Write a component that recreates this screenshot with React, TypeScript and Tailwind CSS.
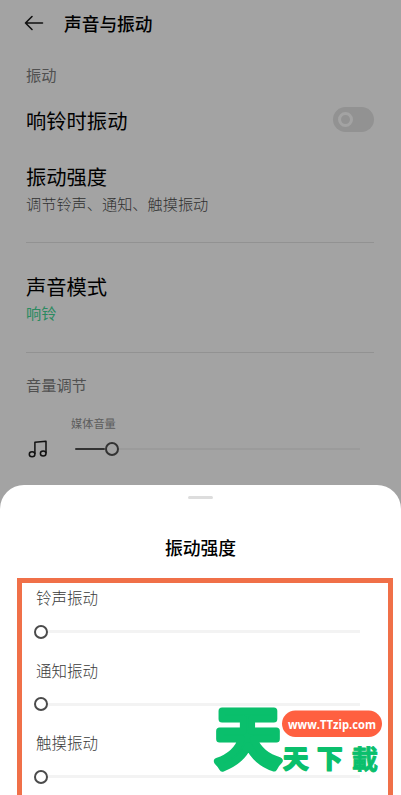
const SHEET_ITEMS = ["铃声振动", "通知振动", "触摸振动"];

const BackIcon = () => {
    return <svg width="20" height="16" viewBox="0 0 20 16" fill="none" stroke="#111111" strokeWidth="1.6" strokeLinecap="round" strokeLinejoin="round">
        <path d="M8 1.5L1.5 8L8 14.5M1.5 8H18.5" />
    </svg>
}

const MusicIcon = () => {
    return <svg width="20" height="18" viewBox="0 0 20 18" fill="none" stroke="#111111" strokeWidth="1.5" strokeLinejoin="round">
        <path d="M6.9 13.9V2.2L18 1.2V13.2" />
        <ellipse cx="4.1" cy="14.2" rx="2.8" ry="2.5" />
        <ellipse cx="15.2" cy="13.5" rx="2.8" ry="2.5" />
    </svg>
}

const Knob = ({ dark }: { dark?: boolean }) => {
    return <div className={dark ? "h-[14px] w-[14px] shrink-0 rounded-full border-[2.5px] border-[#333333] bg-[#a3a3a3]" : "h-[14px] w-[14px] shrink-0 rounded-full border-[2.5px] border-[#4b4b4b] bg-white"}></div>
}

const Watermark = () => {
    return <svg className="absolute left-[200px] top-[665px] overflow-visible" width="195" height="130" viewBox="-10 -35 195 130">
        <rect x="72" y="10.5" width="100" height="26.5" rx="13.25" fill="#ff6040" />
        <text x="78" y="28.5" textLength="88" lengthAdjust="spacingAndGlyphs" fontSize="12.5" fontWeight="700" fill="#ffffff" fontFamily="'Open Sans', 'Noto Sans', sans-serif">www.TTzip.com</text>
        <g fill="#0abf6c" stroke="#0abf6c" strokeLinejoin="round" fontFamily="'Noto Sans CJK SC', sans-serif">
            <text x="5.5" y="62" fontSize="65" fontWeight="700" strokeWidth="7">天</text>
            <text x="73" y="68" fontSize="25.5" fontWeight="700" strokeWidth="1.8">天</text>
            <text x="107" y="68" fontSize="25.5" fontWeight="700" strokeWidth="1.8">下</text>
            <text x="141.5" y="69" fontSize="26.5" fontWeight="700" strokeWidth="0.8">載</text>
        </g>
    </svg>
}

export default function App() {
    return <div className="relative flex h-[795px] w-[401px] flex-col overflow-hidden bg-[#a3a3a3] font-['Noto_Sans_CJK_SC',sans-serif] text-black">
        <div className="flex h-[46px] shrink-0 items-center gap-5 pl-6">
            <BackIcon />
            <div className="text-[17.7px] font-medium">声音与振动</div>
        </div>
        <div className="flex h-[439px] shrink-0 flex-col pl-[26px] pr-[27px]">
            <div className="flex h-[58px] items-center pb-[2px] text-[15.2px] text-[#505050]">振动</div>
            <div className="flex h-8 items-center justify-between">
                <div className="text-[20.3px]">响铃时振动</div>
                <div className="mb-[1px] flex h-[25px] w-[41px] items-center rounded-full bg-[#929292] pl-[5px]">
                    <div className="h-[15px] w-[15px] rounded-full border-[3px] border-[#a3a3a3]"></div>
                </div>
            </div>
            <div className="mt-[26px] flex h-7 items-center text-[20.3px]">振动强度</div>
            <div className="flex h-[26px] items-center text-[15.2px] font-light text-[#303030]">调节铃声、通知、触摸振动</div>
            <div className="mt-[26px] h-px shrink-0 bg-[#929292]"></div>
            <div className="mt-[29px] flex h-7 items-center text-[20.3px]">声音模式</div>
            <div className="flex h-[25px] items-center text-[15.2px] text-[#2b8a60]">响铃</div>
            <div className="mt-[27px] h-px shrink-0 bg-[#929292]"></div>
            <div className="mt-[18px] flex h-[26px] items-center text-[15.2px] text-[#505050]">音量调节</div>
            <div className="mt-4 flex h-5 items-center pl-[45px] text-[11.2px] text-[#5c5c5c]">媒体音量</div>
            <div className="mt-[7px] flex h-[18px] items-center pl-[2px] pr-[14px]">
                <MusicIcon />
                <div className="ml-[27px] h-[2px] w-[30px] rounded-full bg-[#333333]"></div>
                <Knob dark />
                <div className="h-[2px] flex-1 bg-[#9b9b9b]"></div>
            </div>
        </div>
        <div className="flex flex-1 flex-col items-center rounded-t-[24px] bg-white">
            <div className="mt-[11px] h-[3px] w-[25px] rounded-full bg-[#dddddd]"></div>
            <div className="mt-[34px] flex h-7 items-center text-[17.8px] font-medium text-black">振动强度</div>
            <div className="ml-[9px] mt-[17px] flex w-[376px] flex-1 flex-col border-x-[5px] border-t-[5px] border-[#f07048] pl-[12px] pr-[28px]">
                {SHEET_ITEMS.map((item) => {
                    return <div key={item} className="h-[72.5px] shrink-0">
                        <div className="flex h-[28px] items-center pl-[2px] pt-[2px] text-[15.5px] font-light text-[#3a3a3a]">{item}</div>
                        <div className="mt-[13px] flex h-[15px] items-center">
                            <Knob />
                            <div className="h-[3px] flex-1 bg-[#f3f3f3]"></div>
                        </div>
                    </div>
                })}
            </div>
        </div>
        <Watermark />
    </div>
}
